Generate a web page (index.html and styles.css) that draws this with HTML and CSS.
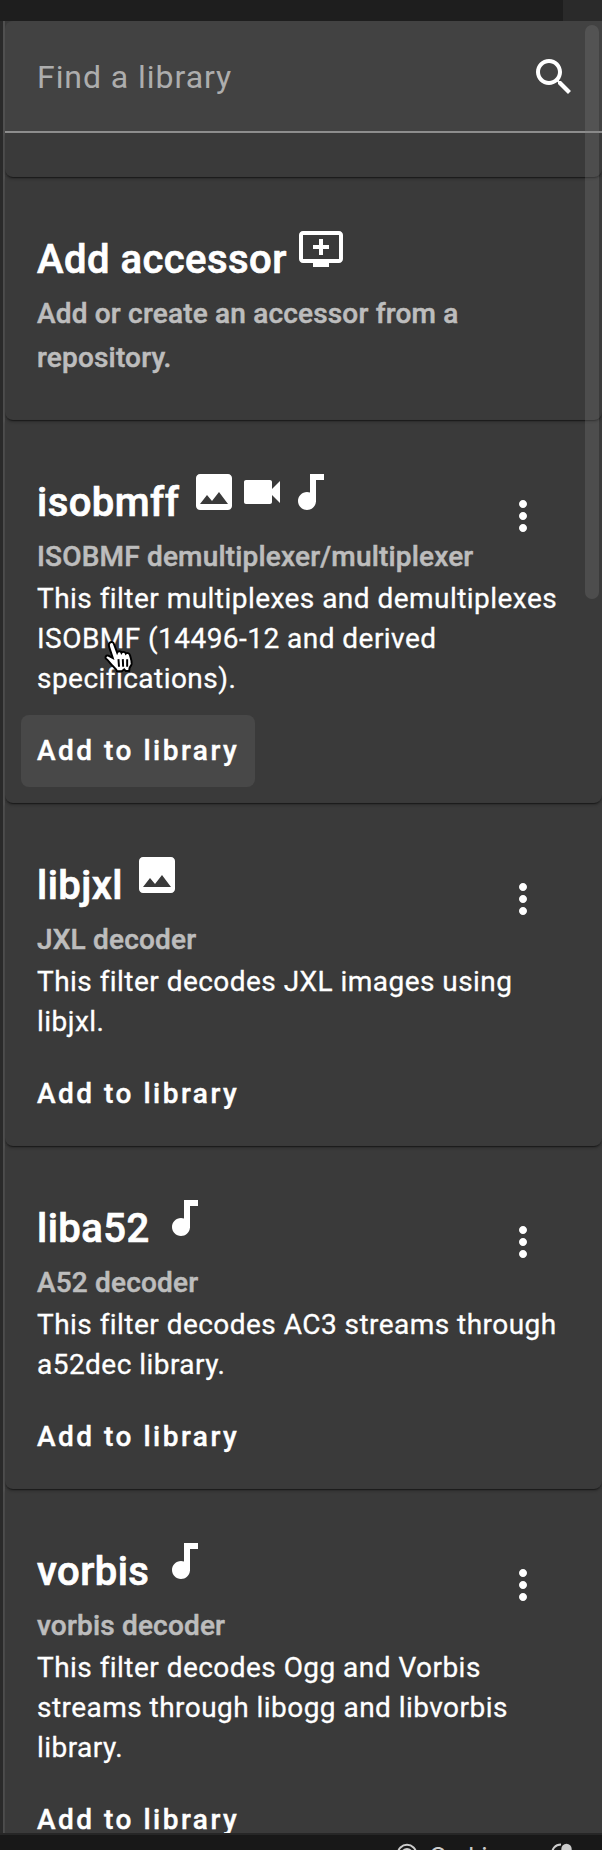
FILE: index.html
```html
<!DOCTYPE html>
<html lang="en">
<head>
<meta charset="utf-8">
<title>Library</title>
<link rel="stylesheet" href="styles.css">
</head>
<body>
<svg class="defs">
  <symbol id="image" viewBox="0 0 24 24"><path d="M21 19V5c0-1.100-.9-2-2-2H5c-1.100 0-2 .9-2 2v14c0 1.100.9 2 2 2h14c1.100 0 2-.9 2-2zM8.500 13.500l2.500 3.010L14.500 12l4.500 6H5l3.500-4.500z"/></symbol>
  <symbol id="video" viewBox="0 0 24 24"><path d="M17 10.500V7c0-.55-.45-1-1-1H4c-.55 0-1 .45-1 1v10c0 .55.45 1 1 1h12c.55 0 1-.45 1-1v-3.500l4 4v-11l-4 4z"/></symbol>
  <symbol id="music" viewBox="0 0 24 24"><path d="M12 3v9.280c-.47-.17-.97-.28-1.500-.28C8.010 12 6 14.010 6 16.500S8.010 21 10.500 21c2.310 0 4.200-1.750 4.450-4H15V6h4V3h-7z"/></symbol>
  <symbol id="queue" viewBox="0 0 24 24"><path d="M21 3H3c-1.110 0-2 .89-2 2v12c0 1.100.89 2 2 2h5v2h8v-2h5c1.100 0 1.990-.9 1.990-2L23 5c0-1.110-.9-2-2-2zm0 14H3V5h18v12zm-5-7v2h-3v3h-2v-3H8v-2h3V7h2v3h3z"/></symbol>
  <symbol id="more" viewBox="0 0 24 24"><path d="M12 8c1.100 0 2-.9 2-2s-.9-2-2-2-2 .9-2 2 .9 2 2 2zm0 2c-1.100 0-2 .9-2 2s.9 2 2 2 2-.9 2-2-.9-2-2-2zm0 6c-1.100 0-2 .9-2 2s.9 2 2 2 2-.9 2-2-.9-2-2-2z"/></symbol>
  <symbol id="search" viewBox="0 0 24 24"><path d="M15.500 14h-.79l-.28-.27C15.410 12.590 16 11.110 16 9.500 16 5.910 13.090 3 9.500 3S3 5.910 3 9.500 5.910 16 9.500 16c1.610 0 3.090-.59 4.230-1.570l.27.28v.79l5 4.990L20.490 19l-4.990-5zm-6 0C7.010 14 5 11.990 5 9.500S7.010 5 9.500 5 14 7.010 14 9.500 11.990 14 9.500 14z"/></symbol>
</svg>
<div class="app">
  <div class="topbar"><div class="topbar-tab"></div></div>
  <main class="panel">
    <div class="search"><span class="placeholder">Find a library</span><svg class="icon"><use href="#search"/></svg></div>
    <div class="card card-scrolled"></div>
    <section class="card card-accessor">
      <h2 class="title">Add accessor <svg class="icon"><use href="#queue"/></svg></h2>
      <h3 class="subtitle">Add or create an accessor from a repository.</h3>
    </section>
    <section class="card">
      <h2 class="title">isobmff <svg class="icon"><use href="#image"/></svg><svg class="icon"><use href="#video"/></svg><svg class="icon"><use href="#music"/></svg></h2>
      <svg class="icon more"><use href="#more"/></svg>
      <h3 class="subtitle">ISOBMF demultiplexer/multiplexer</h3>
      <p class="body">This filter multiplexes and demultiplexes ISOBMF (14496-12 and derived specifications).</p>
      <button class="action hovered">Add to library</button>
      <svg class="cursor" viewBox="0 0 30 34"><path d="M6.500 3.500C8 2 10 3 10.500 5l2.800 7.500c.7-1.600 3.400-1.600 4 .2.900-1.400 3.500-1 4 .7 1-1 3.200-.6 3.800 1.500.6 2.600 2 5.500 1.500 8-.4 1.700-1.700 2.700-2 4.100l-.2 2.500h-3.200l-1.400-1.600-2.200 1.800h-4.400c-.7-2.200-3-4-4.800-5.800-1.700-1.800-3-4-5.200-5.700-1.500-1.300-.2-3.600 2-2.900l4.100 2.100L6 7.500c-.5-1.500-.4-3.100.5-4z"/><path class="cursor-lines" d="M14.500 18.500l.5 7M18.500 18.500l.3 7M22.500 18.500v7"/></svg>
    </section>
    <section class="card">
      <h2 class="title">libjxl <svg class="icon"><use href="#image"/></svg></h2>
      <svg class="icon more"><use href="#more"/></svg>
      <h3 class="subtitle">JXL decoder</h3>
      <p class="body">This filter decodes JXL images using libjxl.</p>
      <button class="action">Add to library</button>
    </section>
    <section class="card">
      <h2 class="title">liba52 <svg class="icon"><use href="#music"/></svg></h2>
      <svg class="icon more"><use href="#more"/></svg>
      <h3 class="subtitle">A52 decoder</h3>
      <p class="body">This filter decodes AC3 streams through a52dec library.</p>
      <button class="action">Add to library</button>
    </section>
    <section class="card">
      <h2 class="title">vorbis <svg class="icon"><use href="#music"/></svg></h2>
      <svg class="icon more"><use href="#more"/></svg>
      <h3 class="subtitle">vorbis decoder</h3>
      <p class="body">This filter decodes Ogg and Vorbis streams through libogg and libvorbis library.</p>
      <button class="action">Add to library</button>
    </section>
    <div class="scrollbar"></div>
  </main>
  <footer class="status">
    <svg class="status-icon" viewBox="0 0 22 22"><circle cx="11" cy="11" r="9.200"/><circle cx="11" cy="11" r="5"/></svg>
    <span class="status-text">Go Live</span>
    <svg class="status-bell" viewBox="0 0 22 22"><path d="M11 1.500C5 1.500 2 6 2 11v6h16"/><circle class="dot" cx="16.500" cy="6" r="5.200"/></svg>
  </footer>
</div>
</body>
</html>
```
FILE: styles.css
```css
* { box-sizing: border-box; }
body { margin: 0; background: #1e1e1e; color: #fff; font-family: Roboto, sans-serif; }
.defs { display: none; }
.app { display: flex; flex-direction: column; width: 602px; height: 1850px; overflow: hidden; }
.topbar { flex: none; display: flex; justify-content: flex-end; height: 21px; background: #1e1e1e; }
.topbar-tab { width: 39px; background: #2a2a2a; }
.panel { position: relative; flex: none; height: 1812px; overflow: hidden; padding-left: 2px; margin-left: 3px; background: #3a3a3a; box-shadow: inset 2px 0 #505050, -3px 0 #2a2a2a; }
.icon { width: 48px; height: 48px; fill: #fff; }
.search { display: flex; align-items: center; justify-content: space-between; height: 112px; padding: 2px 24px 0 32px; background: #424242; border-bottom: 2px solid #8e8e8e; border-top-left-radius: 8px; }
.placeholder { font-size: 32px; letter-spacing: 0.95px; color: #adadad; }
.card { position: relative; padding: 48px 32px 16px; border-radius: 0 0 8px 8px; box-shadow: 0 2px 1px -1px rgba(0,0,0,.4), 0 2px 3px rgba(0,0,0,.25); }
.card-scrolled { height: 44px; padding: 0; }
.card-accessor { padding-bottom: 40px; }
.title { margin: 0; height: 67px; font-size: 40px; line-height: 68px; font-weight: 500; letter-spacing: .46px; white-space: nowrap; -webkit-text-stroke: .7px #fff; }
.title .icon { vertical-align: baseline; }
.subtitle { margin: 0; font-size: 28px; line-height: 44px; font-weight: 500; letter-spacing: .18px; color: #bdbdbd; -webkit-text-stroke: .5px #bdbdbd; }
.body { margin: 0 0 16px; font-size: 28px; line-height: 40px; letter-spacing: .46px; -webkit-text-stroke: .3px #fff; }
.more { position: absolute; top: 72px; right: 55px; }
.action { display: block; height: 72px; margin-left: -16px; padding: 0 16px 2px; border: 0; border-radius: 8px; background: transparent; color: #fff; font: 500 28px Roboto, sans-serif; letter-spacing: 2.500px; -webkit-text-stroke: .4px #fff; }
.hovered { background: #484848; }
.scrollbar { position: absolute; top: 4px; right: 3px; width: 14px; height: 574px; border-radius: 7px; background: rgba(128,128,128,.28); }
.cursor { position: absolute; left: 96px; top: 219px; width: 36px; height: 37px; fill: #fff; stroke: #000; stroke-width: 1.800px; }
.cursor-lines { fill: none; }
.status { flex: none; display: flex; height: 17px; padding: 8px 0 0 396px; background: #181818; border-top: 2px solid #262626; overflow: hidden; color: #ccc; }
.status svg { flex: none; width: 22px; height: 22px; fill: none; stroke: #ccc; stroke-width: 2px; }
.status-text { flex: none; width: 132px; padding-left: 11px; font-family: Inter, sans-serif; font-size: 24px; line-height: 28px; white-space: nowrap; }
.status svg .dot { fill: #ccc; stroke: none; }
```
